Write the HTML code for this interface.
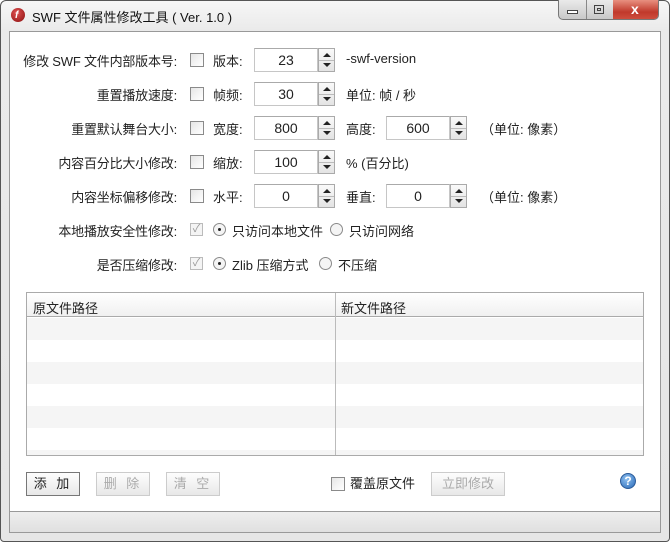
<!DOCTYPE html>
<html><head><meta charset="utf-8"><style>
*{margin:0;padding:0;box-sizing:border-box}
body{width:670px;height:542px;overflow:hidden;background:#fff;font-family:"Liberation Sans","Noto Sans CJK SC","WenQuanYi Zen Hei",sans-serif;font-size:13px;color:#222}
.a{position:absolute}
#frame{left:0;top:0;width:670px;height:542px;border:1px solid #555;border-radius:6px 6px 4px 4px;background:linear-gradient(#f6f6f6,#eaeaea 30px,#e6e6e6)}
#client{left:9px;top:31px;width:652px;height:481px;background:#fff;border:1px solid #999}
#status{left:9px;top:512px;width:652px;height:21px;background:linear-gradient(#eeeeee,#e0e0e0);border:1px solid #999;border-top:none}
.lbl{text-align:right;width:180px;left:0;letter-spacing:-0.2px}
.cb{width:14px;height:14px;border:1px solid #8a8a8a;background:linear-gradient(135deg,#e6e6e6,#fff);}
.inp{height:24px;border:1px solid #c6c6c6;border-top-color:#aaa;text-align:center;line-height:22px;font-size:14px;background:#fff}
.spin{width:17px;height:24px;border:1px solid #aaa;background:linear-gradient(#fafafa,#e4e4e4)}
.spin:before{content:"";position:absolute;left:4px;top:4px;border:4px solid transparent;border-bottom:4px solid #222;border-top:none}
.spin:after{content:"";position:absolute;left:4px;top:14px;border:4px solid transparent;border-top:4px solid #222;border-bottom:none}
.spin i{position:absolute;left:0;top:11px;width:15px;height:1px;background:#bbb}
.rd{width:13px;height:13px;border:1px solid #8a8a8a;border-radius:50%;background:#f4f4f4}
.rd.on:after{content:"";position:absolute;left:4px;top:4px;width:3px;height:3px;border-radius:50%;background:#222}
.ck{width:13px;height:13px;border:1px solid #bbb;background:#f4f4f4;color:#999;font-size:11px;line-height:11px;text-align:center}
.btn{height:24px;border:1px solid #aaa;background:linear-gradient(#fdfdfd,#e8e8e8);text-align:center;line-height:22px;letter-spacing:3px}
.dis{color:#aaa;border-color:#ccc}
</style></head><body>
<div class="a" id="frame"></div>
<div class="a" style="left:11px;top:8px;width:14px;height:14px;border-radius:50%;background:radial-gradient(circle at 40% 35%,#e05050,#8a1010);"></div>
<div class="a" style="left:15px;top:10px;color:#fff;font-size:10px;font-style:italic;font-weight:bold">f</div>
<div class="a" style="left:32px;top:7px;font-size:13px;color:#111">SWF 文件属性修改工具 ( Ver. 1.0 )</div>
<div class="a" style="left:558px;top:0;width:101px;height:20px;border:1px solid #777;border-top:none;border-radius:0 0 5px 5px;background:linear-gradient(#eaeaea,#c8c8c8);overflow:hidden">
 <div class="a" style="left:27px;top:0;width:1px;height:20px;background:#888"></div>
 <div class="a" style="left:54px;top:0;width:47px;height:20px;background:linear-gradient(#e89080,#c0392b 60%,#d05040)"></div>
 <div class="a" style="left:8px;top:10px;width:11px;height:4px;border:1px solid #444;background:#fff"></div>
 <div class="a" style="left:35px;top:5px;width:10px;height:9px;border:1px solid #444"></div>
 <div class="a" style="left:38px;top:8px;width:4px;height:3px;border:1px solid #444"></div>
 <div class="a" style="left:72px;top:1px;color:#fff;font-weight:bold;font-size:14px">x</div>
</div>
<div class="a" id="client"></div>
<div class="a" id="status"></div>

<div class="a lbl" style="top:51px;left:-3px">修改 SWF 文件内部版本号:</div>
<div class="a cb" style="left:190px;top:53px"></div>
<div class="a" style="left:213px;top:51px">版本:</div>
<div class="a inp" style="left:254px;top:48px;width:64px">23</div>
<div class="a spin" style="left:318px;top:48px"><i></i></div>
<div class="a" style="left:346px;top:51px">-swf-version</div>

<div class="a lbl" style="top:85px;left:-3px">重置播放速度:</div>
<div class="a cb" style="left:190px;top:87px"></div>
<div class="a" style="left:213px;top:85px">帧频:</div>
<div class="a inp" style="left:254px;top:82px;width:64px">30</div>
<div class="a spin" style="left:318px;top:82px"><i></i></div>
<div class="a" style="left:346px;top:85px">单位: 帧 / 秒</div>

<div class="a lbl" style="top:119px;left:-3px">重置默认舞台大小:</div>
<div class="a cb" style="left:190px;top:121px"></div>
<div class="a" style="left:213px;top:119px">宽度:</div>
<div class="a inp" style="left:254px;top:116px;width:64px">800</div>
<div class="a spin" style="left:318px;top:116px"><i></i></div>
<div class="a" style="left:346px;top:119px">高度:</div>
<div class="a inp" style="left:386px;top:116px;width:64px">600</div>
<div class="a spin" style="left:450px;top:116px"><i></i></div>
<div class="a" style="left:481px;top:119px">（单位: 像素）</div>

<div class="a lbl" style="top:153px;left:-3px">内容百分比大小修改:</div>
<div class="a cb" style="left:190px;top:155px"></div>
<div class="a" style="left:213px;top:153px">缩放:</div>
<div class="a inp" style="left:254px;top:150px;width:64px">100</div>
<div class="a spin" style="left:318px;top:150px"><i></i></div>
<div class="a" style="left:346px;top:153px">% (百分比)</div>

<div class="a lbl" style="top:187px;left:-3px">内容坐标偏移修改:</div>
<div class="a cb" style="left:190px;top:189px"></div>
<div class="a" style="left:213px;top:187px">水平:</div>
<div class="a inp" style="left:254px;top:184px;width:64px">0</div>
<div class="a spin" style="left:318px;top:184px"><i></i></div>
<div class="a" style="left:346px;top:187px">垂直:</div>
<div class="a inp" style="left:386px;top:184px;width:64px">0</div>
<div class="a spin" style="left:450px;top:184px"><i></i></div>
<div class="a" style="left:481px;top:187px">（单位: 像素）</div>

<div class="a lbl" style="top:221px;left:-3px">本地播放安全性修改:</div>
<div class="a ck" style="left:190px;top:223px">✓</div>
<div class="a rd on" style="left:213px;top:223px"></div>
<div class="a" style="left:232px;top:221px">只访问本地文件</div>
<div class="a rd" style="left:330px;top:223px"></div>
<div class="a" style="left:349px;top:221px">只访问网络</div>

<div class="a lbl" style="top:255px;left:-3px">是否压缩修改:</div>
<div class="a ck" style="left:190px;top:257px">✓</div>
<div class="a rd on" style="left:213px;top:257px"></div>
<div class="a" style="left:232px;top:255px">Zlib 压缩方式</div>
<div class="a rd" style="left:319px;top:257px"></div>
<div class="a" style="left:338px;top:255px">不压缩</div>

<div class="a" style="left:26px;top:292px;width:618px;height:164px;border:1px solid #aaa;background:#fff;overflow:hidden">
 <div class="a" style="left:0;top:0;width:616px;height:24px;background:linear-gradient(#fff,#f0f0f0);border-bottom:1px solid #aaa"></div>
 <div class="a" style="left:0;top:25px;width:616px;height:22px;background:#f5f5f5"></div>
 <div class="a" style="left:0;top:69px;width:616px;height:22px;background:#f5f5f5"></div>
 <div class="a" style="left:0;top:113px;width:616px;height:22px;background:#f5f5f5"></div>
 <div class="a" style="left:0;top:157px;width:616px;height:22px;background:#f5f5f5"></div>
 <div class="a" style="left:308px;top:0;width:1px;height:164px;background:#bbb"></div>
 <div class="a" style="left:6px;top:5px">原文件路径</div>
 <div class="a" style="left:314px;top:5px">新文件路径</div>
</div>

<div class="a btn" style="left:26px;top:472px;width:54px;border-color:#777">添 加</div>
<div class="a btn dis" style="left:96px;top:472px;width:54px">删 除</div>
<div class="a btn dis" style="left:166px;top:472px;width:54px">清 空</div>
<div class="a cb" style="left:331px;top:477px"></div>
<div class="a" style="left:350px;top:473px">覆盖原文件</div>
<div class="a btn dis" style="left:431px;top:472px;width:74px;letter-spacing:0">立即修改</div>
<div class="a" style="left:620px;top:473px;width:16px;height:16px;border-radius:50%;background:radial-gradient(circle at 40% 35%,#8ec0f0,#2a6ab8);border:1px solid #2a5a98;color:#fff;font-size:12px;font-weight:bold;text-align:center;line-height:14px">?</div>
</body></html>
